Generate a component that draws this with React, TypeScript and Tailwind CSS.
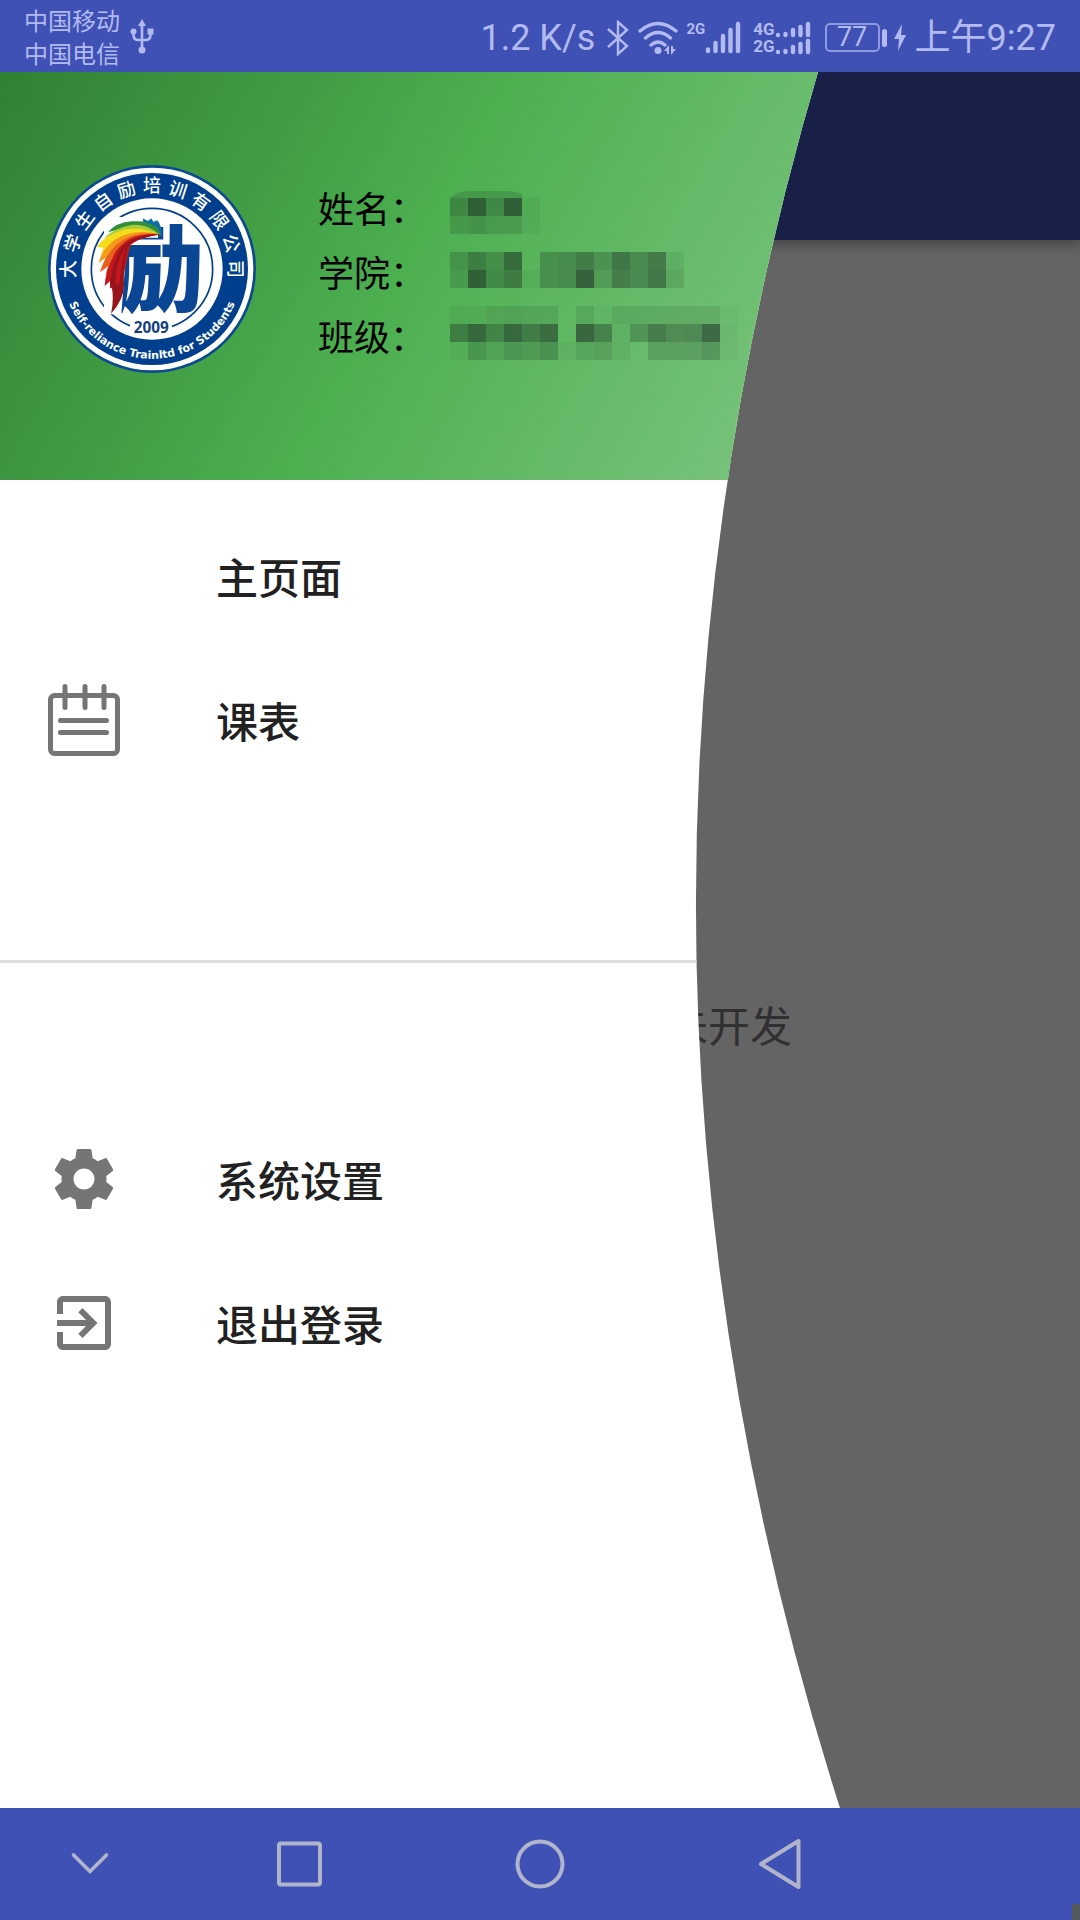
import type { ReactNode } from "react";

const RING_CHARS = Array.from("大学生自励培训有限公司");

function Feather() {
  return (
    <g>
      <path fill="#fff" d="M222 200H384V262H292L274 492H222Z" />
      <path fill="#0d6fa8" d="M326 214 L340 214 L338 204 L354 212 L364 204 L370 214 L382 210 Q396 226 396 260 Q376 228 326 214Z" />
      <path fill="#2f8f3c" d="M234 246 Q258 216 306 213 Q350 210 376 228 Q390 238 392 258 Q350 226 300 232 Q262 236 234 246Z" />
      <path fill="#a9cc38" d="M222 264 Q250 234 304 224 Q350 220 388 252 Q330 234 290 246 Q256 250 222 264Z" />
      <path fill="#f7dc1c" d="M200 290 Q222 256 280 238 Q330 228 388 252 Q320 244 286 262 Q254 280 240 306 L238 290 L212 316 L220 292Z" />
      <path fill="#f39a1d" d="M206 338 Q214 300 254 268 Q310 232 390 252 Q316 252 284 284 Q256 314 244 350 L242 324 L220 356 L226 322Z" />
      <path fill="#e8611c" d="M210 366 Q220 324 258 284 Q310 238 392 252 Q326 254 294 294 Q262 340 246 380 L246 350 L226 376 L234 348Z" />
      <path fill="#c5161d" d="M224 408 Q226 360 256 306 Q294 244 392 252 Q340 258 302 282 Q286 340 276 410 L240 414 L240 392Z" />
      <path fill="#96141b" d="M243 490 Q252 450 246 414 Q238 404 242 380 Q250 340 266 306 Q300 250 392 253 Q312 262 294 290 Q278 340 282 400 Q284 446 243 490Z" />
      <path fill="#c5161d" d="M256 400 Q256 330 290 284 Q276 330 268 400Z" />
    </g>
  );
}

function Logo() {
  return (
    <svg viewBox="54 44 624 624" className="size-52 shrink-0" role="img" aria-label="大学生自励培训有限公司 2009">
      <circle cx="366" cy="356" r="312" fill="#0b4a8f" />
      <circle cx="366" cy="356" r="304" fill="#fff" />
      <circle cx="366" cy="356" r="288" fill="#003f8d" />
      <circle cx="366" cy="356" r="212" fill="#fff" />
      <circle cx="366" cy="356" r="182" fill="none" stroke="#003f8d" strokeWidth="5" />
      <rect x="300" y="508" width="126" height="46" fill="#fff" />
      <g fill="#fff" fontSize="54" fontWeight="500" textAnchor="middle" fontFamily="'Noto Sans CJK SC', sans-serif">
        {RING_CHARS.map((c, i) => (
          <text key={i} x="366" y="126" transform={`rotate(${-90 + i * 18} 366 356)`}>
            {c}
          </text>
        ))}
      </g>
      <path id="ring-bottom" d="M103 300 A269 269 0 1 0 629 300" fill="none" />
      <text fill="#fff" fontSize="33" fontWeight="700" textAnchor="middle" fontFamily="'DejaVu Sans', sans-serif">
        <textPath href="#ring-bottom" startOffset="50%">
          Self-reliance Trainltd for Students
        </textPath>
      </text>
      <text x="380" y="462" textAnchor="middle" fill="#0b4694" fontSize="286" fontWeight="900" fontFamily="'Noto Sans CJK SC', sans-serif">
        励
      </text>
      <Feather />
      <text x="364" y="548" textAnchor="middle" fill="#123f80" fontSize="46" fontWeight="700" fontFamily="'Open Sans', sans-serif">
        2009
      </text>
    </svg>
  );
}

/* Darkness of each 18px cell of the redacted values, row by row. */
const MOSAIC = [
  { y: 10, cells: [22, 44, 22, 44, 4] },
  { y: 28, cells: [12, 16, 12, 12, 4] },
  { y: 64, cells: [16, 28, 20, 38, 0, 20, 22, 30, 20, 34, 24, 32, 6] },
  { y: 82, cells: [12, 44, 22, 30, 4, 20, 22, 44, 14, 30, 24, 34, 10] },
  { y: 118, cells: [4, 4, 8, 10, 8, 8, 0, 8, 2, 8, 8, 8, 8, 8, 8, 2] },
  { y: 136, cells: [28, 40, 26, 40, 30, 38, 0, 42, 28, 4, 20, 32, 24, 26, 42, 3] },
  { y: 154, cells: [3, 16, 10, 16, 14, 20, 3, 10, 12, 5, 0, 14, 14, 15, 20, 3] },
];

function Mosaic() {
  return (
    <svg viewBox="0 -18 288 198" className="h-[198px] w-[288px] shrink-0" aria-hidden="true">
      <path d="M0 10Q8 3 20 3H58Q66 4 72 6V10Z" fill="#141e1e" fillOpacity=".16" />
      {MOSAIC.map(({ y, cells }) =>
        cells.map((v, c) =>
          v ? <rect key={`${y}-${c}`} x={c * 18} y={y} width="18" height="18" fill="#141e1e" fillOpacity={v / 80} /> : null,
        ),
      )}
    </svg>
  );
}

function SignalBars({ small = false }: { small?: boolean }) {
  return small ? (
    <svg viewBox="0 0 36 17" className="h-[17px] w-[36px]" fill="none" stroke="currentColor" strokeWidth="4.400" strokeLinecap="round" aria-hidden="true">
      <path d="M3 14v.1M10.500 13v1M18 9v5M25.500 6v8M33 3v11" />
    </svg>
  ) : (
    <svg viewBox="0 0 36 34" className="h-[34px] w-[36px]" fill="none" stroke="currentColor" strokeWidth="4.400" strokeLinecap="round" aria-hidden="true">
      <path d="M3 28.500v1.500M10.500 22v8M18 15v15M25.500 9v21M33 3v27" />
    </svg>
  );
}

function StatusBar() {
  return (
    <header className="relative z-20 flex h-[72px] shrink-0 items-center bg-[#3f51b5] pl-6 pr-6 text-[#b2baf0]">
      <div className="text-[24px] leading-[33px]">
        <p>中国移动</p>
        <p>中国电信</p>
      </div>
      <svg viewBox="0 0 24 36" className="ml-[10px] h-9 w-6" fill="none" stroke="currentColor" strokeWidth="2.600" aria-hidden="true">
        <path d="M12 6v26M3.500 14v3q0 5 5 5h7q5 0 5-5v-3" />
        <path d="M12 1l4 7H8z" fill="currentColor" stroke="none" />
        <circle cx="3.500" cy="13.500" r="3" fill="currentColor" stroke="none" />
        <rect x="17.500" y="10.500" width="6" height="6" fill="currentColor" stroke="none" />
        <circle cx="12" cy="32" r="3.500" fill="currentColor" stroke="none" />
      </svg>
      <div className="ml-auto flex items-center pt-[3px] font-['Roboto','Noto_Sans_CJK_SC',sans-serif]">
        <span className="mr-3 text-[36px] leading-[42px]">1.2 K/s</span>
        <svg viewBox="0 0 22 36" className="mr-[9px] h-9 w-[22px]" fill="none" stroke="currentColor" strokeWidth="2.400" aria-hidden="true">
          <path d="M1 9l19 17-9 8V2l9 8L1 27" />
        </svg>
        <svg viewBox="0 0 40 34" className="mr-2 h-[34px] w-10" fill="none" stroke="currentColor" strokeWidth="3.400" strokeLinecap="round" aria-hidden="true">
          <path d="M2 10Q20-5 38 10M7.500 17Q20 6 32.500 17M13 24Q20 18 27 24" />
          <circle cx="20" cy="29.500" r="3.500" fill="currentColor" stroke="none" />
          <path d="M26 30l5-6v9h-2v-3zM38 28l-5 6v-9h2v3z" fill="currentColor" stroke="none" />
        </svg>
        <span className="mt-1 self-start text-[15px] font-bold leading-4">2G</span>
        <SignalBars />
        <div className="ml-3 flex flex-col text-[17px] font-bold leading-[17px]">
          <div className="flex items-center">
            4G
            <SignalBars small />
          </div>
          <div className="flex items-center">
            2G
            <SignalBars small />
          </div>
        </div>
        <div className="ml-[14px] flex h-[29px] w-[55px] items-center justify-center rounded-[5px] border-2 border-[#8f9ae0] text-[27px] leading-none">
          77
        </div>
        <div className="ml-[2px] h-[18px] w-[5px] rounded-full bg-[#b2baf0]" />
        <svg viewBox="0 0 12 27" className="ml-[7px] mr-[9px] h-[27px] w-3" fill="currentColor" aria-hidden="true">
          <path d="M8 0L0 15h5L4 27l8-16H7z" />
        </svg>
        <time className="text-[36px] leading-[42px]">上午9:27</time>
      </div>
    </header>
  );
}

function NavItem({ icon, label }: { icon?: ReactNode; label: string }) {
  return (
    <li>
      <button type="button" className="flex h-36 w-full items-center pl-12 text-left text-[42px] font-medium leading-[60px] text-[#212121]">
        <span className="mr-24 size-[72px] text-[#757575]">{icon}</span>
        {label}
      </button>
    </li>
  );
}

const scheduleIcon = (
  <svg viewBox="0 0 72 72" className="size-full" fill="none" stroke="currentColor" strokeWidth="5" strokeLinecap="round" aria-hidden="true">
    <rect x="2.500" y="11.500" width="67" height="58" rx="4" />
    <path d="M17 2.500v21M37 2.500v21M56 2.500v21M12.500 36.500h46M12.500 48.500h46" />
  </svg>
);

const settingsIcon = (
  <svg viewBox="0 0 24 24" className="size-full" fill="currentColor" aria-hidden="true">
    <path d="M19.430 12.980c.04-.32.07-.64.07-.98s-.03-.66-.07-.98l2.110-1.650c.19-.15.24-.42.12-.64l-2-3.460c-.12-.22-.39-.3-.61-.22l-2.490 1c-.52-.4-1.080-.73-1.690-.98l-.38-2.650C14.460 2.180 14.250 2 14 2h-4c-.25 0-.46.18-.49.42l-.38 2.650c-.61.25-1.170.59-1.690.98l-2.490-1c-.23-.09-.49 0-.61.22l-2 3.460c-.13.22-.07.49.12.64l2.110 1.650c-.04.32-.07.65-.07.98s.03.66.07.98l-2.110 1.650c-.19.15-.24.42-.12.64l2 3.460c.12.22.39.3.61.22l2.490-1c.52.4 1.080.73 1.690.98l.38 2.650c.03.24.24.42.49.42h4c.25 0 .46-.18.49-.42l.38-2.650c.61-.25 1.170-.59 1.690-.98l2.490 1c.23.09.49 0 .61-.22l2-3.460c.12-.22.07-.49-.12-.64l-2.110-1.650zM12 15.500c-1.930 0-3.500-1.570-3.500-3.500s1.570-3.500 3.500-3.500 3.500 1.570 3.500 3.500-1.570 3.500-3.500 3.500z" />
  </svg>
);

const exitIcon = (
  <svg viewBox="0 0 24 24" className="size-full" fill="currentColor" aria-hidden="true">
    <path d="M10.090 15.590L11.500 17l5-5-5-5-1.410 1.410L12.670 11H3v2h9.670l-2.580 2.590zM19 3H5c-1.110 0-2 .9-2 2v4h2V5h14v14H5v-4H3v4c0 1.100.89 2 2 2h14c1.100 0 2-.9 2-2V5c0-1.100-.9-2-2-2z" />
  </svg>
);

function Drawer() {
  return (
    <aside className="absolute inset-y-0 left-0 z-10 w-7/9 bg-white [clip-path:url(#drawer-edge)]">
      <svg width="0" height="0" className="absolute" aria-hidden="true">
        <clipPath id="drawer-edge" clipPathUnits="objectBoundingBox">
          <path d="M0 0H1Q.657 .5 1 1H0Z" />
        </clipPath>
      </svg>
      <div className="flex h-[480px] items-center bg-[linear-gradient(119.7deg,#2e7d32,#4caf50_50%,#81c784)] pl-12 pt-[58px]">
        <Logo />
        <div className="ml-[62px] pt-1 text-[36px] leading-[64px] text-black">
          <p>姓名：</p>
          <p>学院：</p>
          <p>班级：</p>
        </div>
        <div className="ml-6">
          <Mosaic />
        </div>
      </div>
      <nav className="pt-6">
        <ul>
          <NavItem label="主页面" />
          <NavItem label="课表" icon={scheduleIcon} />
        </ul>
        <hr className="mb-36 mt-[168px] border-t-[3px] border-[#dedede]" />
        <ul>
          <NavItem label="系统设置" icon={settingsIcon} />
          <NavItem label="退出登录" icon={exitIcon} />
        </ul>
      </nav>
    </aside>
  );
}

function SystemNav() {
  const button = "flex h-28 items-center justify-center";
  const icon = "size-[52px]";
  return (
    <footer className="relative z-20 grid shrink-0 grid-cols-[3fr_4fr_4fr_4fr_3fr] bg-[#3f51b5] text-[#b1b5cc]">
      <button type="button" aria-label="隐藏导航栏" className={button}>
        <svg viewBox="0 0 52 52" className={icon} fill="none" stroke="currentColor" strokeWidth="3.600" strokeLinecap="round">
          <path d="M9.500 17L26 33.500 42.500 17" />
        </svg>
      </button>
      <button type="button" aria-label="最近任务" className={button}>
        <svg viewBox="0 0 52 52" className={icon} fill="none" stroke="currentColor" strokeWidth="4">
          <rect x="5" y="5.500" width="41" height="41" rx="2" />
        </svg>
      </button>
      <button type="button" aria-label="主屏幕" className={button}>
        <svg viewBox="0 0 52 52" className={icon} fill="none" stroke="currentColor" strokeWidth="4">
          <circle cx="26" cy="26" r="22.500" />
        </svg>
      </button>
      <button type="button" aria-label="返回" className={button}>
        <svg viewBox="0 0 52 52" className={icon} fill="none" stroke="currentColor" strokeWidth="4" strokeLinejoin="round">
          <path d="M44.500 3v46L7 26z" />
        </svg>
      </button>
      <span className="h-4 w-2 self-end justify-self-end bg-[#555a5e]" />
    </footer>
  );
}

export default function App() {
  return (
    <div className="flex min-h-screen flex-col bg-[#646464] font-['Noto_Sans_CJK_SC',sans-serif]" lang="zh-CN">
      <div className="relative flex grow flex-col overflow-hidden">
        <StatusBar />
        <main className="flex grow flex-col">
          <div className="h-[168px] bg-[#192048] shadow-[0_4px_12px_rgba(0,0,0,0.35)]" />
          <div className="flex grow items-center justify-end pr-[288px]">
            <p className="text-[42px] leading-[60px] text-[#303030]">未开发</p>
          </div>
        </main>
        <Drawer />
      </div>
      <SystemNav />
    </div>
  );
}
